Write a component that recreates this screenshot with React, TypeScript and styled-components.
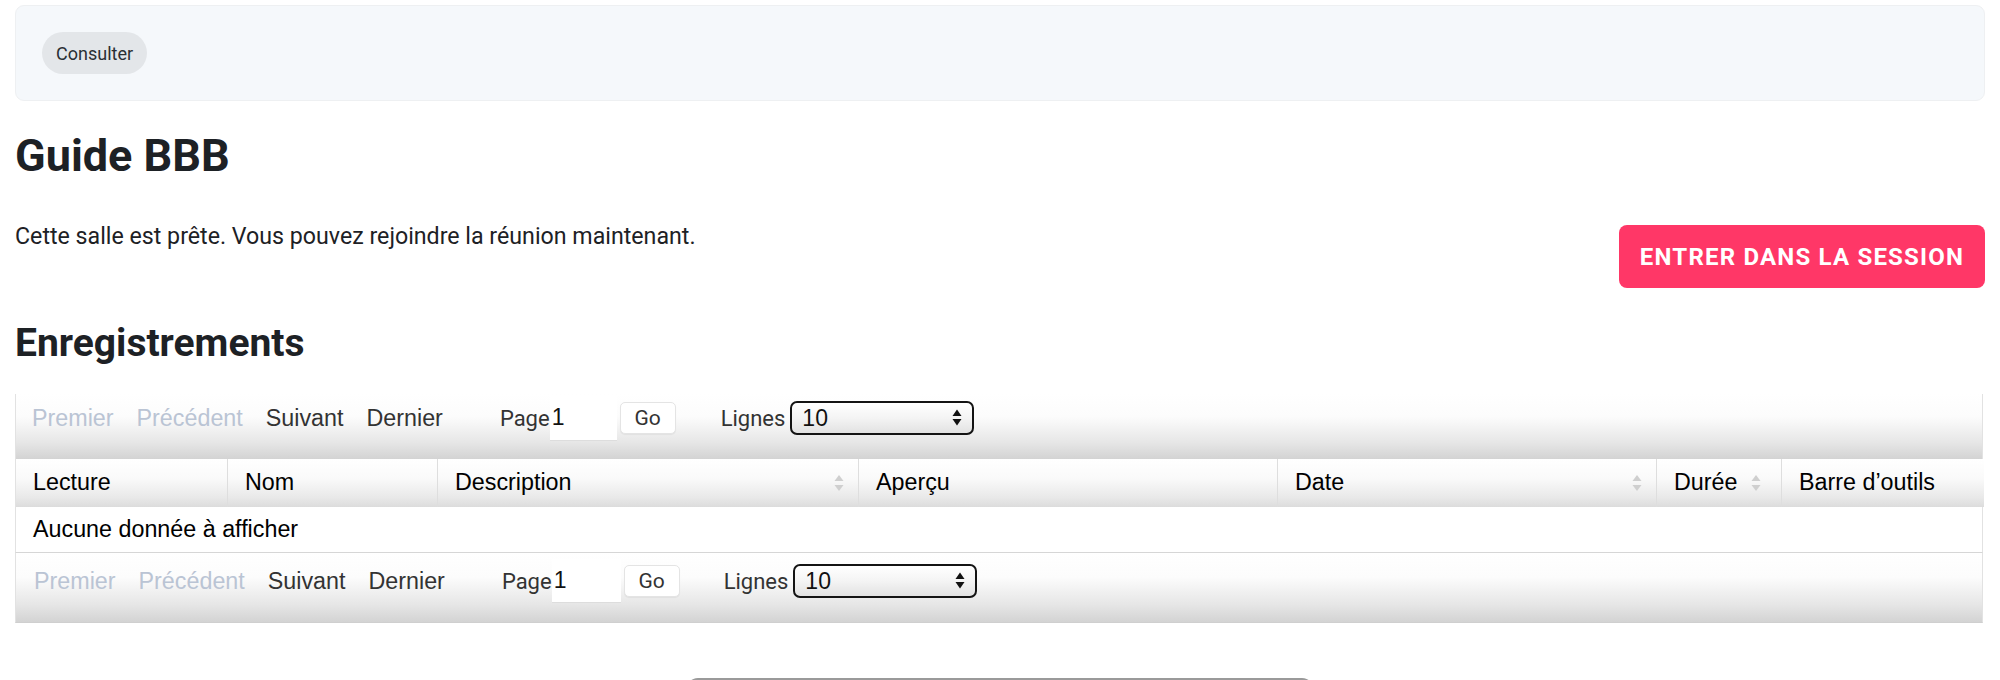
import React from 'react';
import styled, { createGlobalStyle } from 'styled-components';

const GlobalStyle = createGlobalStyle`
  body {
    margin: 0;
    background: #fff;
    font-family: Roboto, "Noto Sans", sans-serif;
    color: #1d2125;
  }
`;

const Page = styled.div`
  padding: 5px 15px 0 15px;
`;

const TopBar = styled.div`
  height: 96px;
  box-sizing: border-box;
  background: #f5f8fb;
  border: 1px solid #eef0f2;
  border-radius: 9px;
  display: flex;
  align-items: center;
  padding-left: 26px;
`;

const Pill = styled.span`
  display: inline-flex;
  align-items: center;
  height: 42px;
  padding: 0 14px;
  border-radius: 21px;
  background: #e3e6e9;
  color: #2a2f34;
  font-size: 18px;
`;

const Title = styled.h2<{ $size: number; $top: number }>`
  margin: ${(p) => p.$top}px 0 0;
  font-size: ${(p) => p.$size}px;
  line-height: 1.2;
  font-weight: 700;
  color: #1d2125;
`;

const InfoRow = styled.div`
  display: flex;
  justify-content: space-between;
  align-items: flex-start;
  margin-top: 37px;
`;

const InfoText = styled.p`
  margin: 0;
  font-size: 23.2px;
  line-height: 1.4;
`;

const JoinButton = styled.button`
  margin-top: 5px;
  height: 63px;
  width: 366px;
  border: none;
  border-radius: 8px;
  background: #ff3767;
  color: #fff;
  font-family: Roboto, sans-serif;
  font-weight: 700;
  font-size: 24px;
  letter-spacing: 1.2px;
  text-transform: uppercase;
  cursor: pointer;
`;

const Grid = styled.div`
  margin-top: 27px;
  width: 1968px;
  font-family: "Liberation Sans", Arial, sans-serif;
  font-size: 23.3px;
`;

const Pager = styled.div<{ $bottom?: boolean }>`
  height: ${(p) => (p.$bottom ? 70 : 65)}px;
  box-sizing: border-box;
  padding-top: ${(p) => (p.$bottom ? 6 : 2)}px;
  padding-left: ${(p) => (p.$bottom ? 18 : 16)}px;
  border-left: 1px solid #e2e2e2;
  border-right: 1px solid #e2e2e2;
  border-bottom: ${(p) => (p.$bottom ? '1px solid #cfcfcf' : 'none')};
  background: linear-gradient(#fff 0%, #fcfcfc 35%, #e6e6e6 75%, #d3d3d3 100%);
`;

const PagerRow = styled.div`
  height: 45px;
  display: flex;
  align-items: center;
`;

const NavLink = styled.span<{ $disabled?: boolean }>`
  color: ${(p) => (p.$disabled ? '#bac4d4' : '#333')};
  margin-right: 23px;
`;

const PlexLabel = styled.span<{ $gap: number }>`
  font-family: Roboto, sans-serif;
  font-size: 22px;
  color: #333;
  margin-left: ${(p) => p.$gap}px;
`;

const PageInput = styled.input<{ $wide?: boolean }>`
  width: ${(p) => (p.$wide ? 69 : 67)}px;
  height: ${(p) => (p.$wide ? 44 : 45)}px;
  box-sizing: border-box;
  border: none;
  border-bottom: 1px solid #ddd;
  background: #fff;
  font-family: "Liberation Sans", Arial, sans-serif;
  font-size: 23px;
  padding: 0 2px;
  color: #111;
  outline: none;
`;

const GoButton = styled.button`
  margin-left: 3px;
  width: 56px;
  height: 32px;
  box-sizing: border-box;
  border: 1px solid #e4e4e4;
  border-radius: 5px;
  background: #fff;
  box-shadow: 0 1px 1px rgba(0, 0, 0, 0.05);
  font-family: Roboto, sans-serif;
  font-size: 21px;
  color: #333;
  padding: 0;
`;

const SelectWrap = styled.span`
  position: relative;
  display: inline-flex;
  margin-left: 5px;
`;

const LinesSelect = styled.select`
  appearance: none;
  width: 184px;
  height: 34px;
  box-sizing: border-box;
  border: 2px solid #141414;
  border-radius: 7px;
  background: linear-gradient(#fff 0%, #f4f4f4 50%, #e2e2e2 100%);
  font-family: "Liberation Sans", Arial, sans-serif;
  font-size: 23px;
  color: #111;
  padding: 0 0 0 10px;
`;

const SelectArrows = styled.svg`
  position: absolute;
  right: 12px;
  top: 8px;
  pointer-events: none;
`;

const HeaderRow = styled.div`
  display: grid;
  grid-template-columns: 212px 210px 421px 419px 379px 125px 202px;
  height: 48px;
  border-left: 1px solid #e2e2e2;
  border-right: 1px solid #e2e2e2;
`;

const HeaderCell = styled.div`
  display: flex;
  align-items: center;
  justify-content: space-between;
  padding: 0 14px 0 17px;
  border-right: 1px solid #dedede;
  background: linear-gradient(#fff 0%, #fafafa 40%, #e9e9e9 80%, #dcdcdc 100%);
  color: #000;
  &:last-child {
    border-right: none;
  }
`;

const CellLabel = styled.span`
  display: inline-flex;
  align-items: center;
  gap: 14px;
`;

const EmptyRow = styled.div`
  height: 46px;
  box-sizing: border-box;
  display: flex;
  align-items: center;
  padding-left: 17px;
  border-left: 1px solid #e2e2e2;
  border-right: 1px solid #e2e2e2;
  border-bottom: 1px solid #d6d6d6;
  color: #000;
`;

const Footer = styled.div`
  display: flex;
  justify-content: center;
  margin-top: 55px;
`;

const OutlineBox = styled.div`
  width: 624px;
  height: 50px;
  border: 2px solid #9a9a9a;
  border-radius: 12px;
`;

const SortIcon = () => (
  <svg width="10" height="18" viewBox="0 0 10 18">
    <path d="M5 1 L9.5 7 H0.5 Z" fill="#cfcfcf" />
    <path d="M5 17 L9.5 11 H0.5 Z" fill="#cfcfcf" />
  </svg>
);

const columns: { label: string; sortable?: boolean; inline?: boolean }[] = [
  { label: 'Lecture' },
  { label: 'Nom' },
  { label: 'Description', sortable: true },
  { label: 'Aperçu' },
  { label: 'Date', sortable: true },
  { label: 'Durée', sortable: true, inline: true },
  { label: 'Barre d’outils' },
];

const PagerBar = ({ bottom }: { bottom?: boolean }) => (
  <Pager $bottom={bottom}>
    <PagerRow>
      <NavLink $disabled>Premier</NavLink>
      <NavLink $disabled>Précédent</NavLink>
      <NavLink>Suivant</NavLink>
      <NavLink>Dernier</NavLink>
      <PlexLabel $gap={34}>Page</PlexLabel>
      <PageInput $wide={bottom} defaultValue="1" />
      <GoButton>Go</GoButton>
      <PlexLabel $gap={bottom ? 44 : 45}>Lignes</PlexLabel>
      <SelectWrap>
        <LinesSelect defaultValue="10">
          <option value="10">10</option>
          <option value="20">20</option>
          <option value="50">50</option>
        </LinesSelect>
        <SelectArrows width="10" height="17" viewBox="0 0 10 17">
          <path d="M5 0.5 L9.5 7 H0.5 Z" fill="#111" />
          <path d="M5 16.5 L9.5 10 H0.5 Z" fill="#111" />
        </SelectArrows>
      </SelectWrap>
    </PagerRow>
  </Pager>
);

const App: React.FC = () => {
  return (
    <>
      <GlobalStyle />
      <Page>
        <TopBar>
          <Pill>Consulter</Pill>
        </TopBar>

        <Title $size={45} $top={28}>Guide BBB</Title>

        <InfoRow>
          <InfoText>Cette salle est prête. Vous pouvez rejoindre la réunion maintenant.</InfoText>
          <JoinButton>Entrer dans la session</JoinButton>
        </InfoRow>

        <Title $size={39} $top={32}>Enregistrements</Title>

        <Grid>
          <PagerBar />
          <HeaderRow>
            {columns.map((c) => (
              <HeaderCell key={c.label}>
                {c.inline ? (
                  <CellLabel>
                    {c.label}
                    <SortIcon />
                  </CellLabel>
                ) : (
                  <>
                    <span>{c.label}</span>
                    {c.sortable && <SortIcon />}
                  </>
                )}
              </HeaderCell>
            ))}
          </HeaderRow>
          <EmptyRow>Aucune donnée à afficher</EmptyRow>
          <PagerBar bottom />
        </Grid>

        <Footer>
          <OutlineBox />
        </Footer>
      </Page>
    </>
  );
};

export default App;
